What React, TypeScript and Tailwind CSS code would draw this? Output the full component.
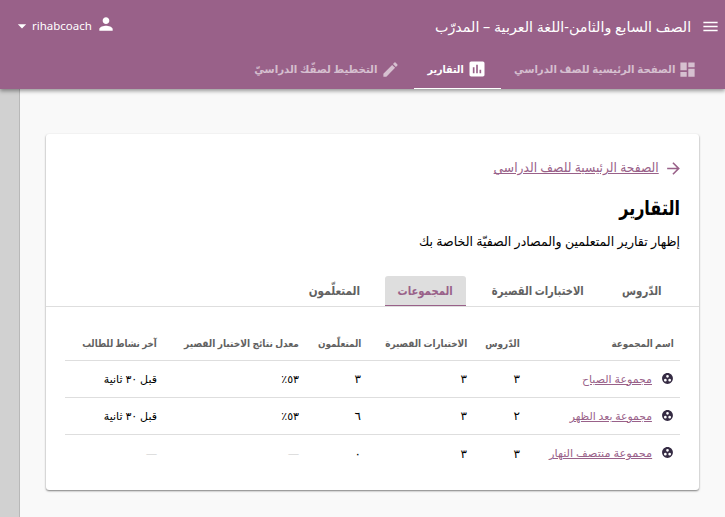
import type { ReactNode } from "react";
import {
  MdMenu,
  MdPerson,
  MdArrowDropDown,
  MdDashboard,
  MdAssessment,
  MdArrowForward,
  MdGroupWork,
} from "react-icons/md";

const font = "font-['Noto_Sans','DejaVu_Sans',sans-serif]";
const columns = "grid grid-cols-[154px_53px_106px_62px_142px_98px]";

const headings = [
  { label: "اسم المجموعة", fit: "scale-x-[0.88]" },
  { label: "الدّروس", fit: "scale-x-[0.89]" },
  { label: "الاختبارات القصيرة", fit: "scale-x-[0.89]" },
  { label: "المتعلّمون", fit: "scale-x-[0.88]" },
  { label: "معدل نتائج الاختبار القصير", fit: "scale-x-[0.905]" },
  { label: "آخر نشاط للطالب", fit: "scale-x-[0.87]" },
];

const groups = [
  { name: "مجموعة الصباح", fit: "scale-x-100", cells: ["٣", "٣", "٣", "٥٣٪", "قبل ٣٠ ثانية"] },
  { name: "مجموعة بعد الظهر", fit: "scale-x-[0.98]", cells: ["٢", "٣", "٦", "٥٣٪", "قبل ٣٠ ثانية"] },
  { name: "مجموعة منتصف النهار", fit: "scale-x-[1.03]", cells: ["٣", "٣", "٠", "—", "—"] },
];

// Condensed text anchored at its right-hand start.
function Fit({ children, className }: { children: ReactNode; className: string }) {
  return <span className={`inline-block origin-right whitespace-nowrap ${className}`}>{children}</span>;
}

function PencilIcon() {
  return (
    <svg viewBox="0 0 24 24" className="size-[19px] shrink-0" fill="currentColor">
      <path d="M3 17.25V21h3.75L17.81 9.94l-3.75-3.75L3 17.25zM20.71 7.04a1 1 0 0 0 0-1.41l-2.34-2.34a1 1 0 0 0-1.41 0l-1.83 1.83 3.75 3.75 1.83-1.83z" />
    </svg>
  );
}

function NavTab({ icon, children, className }: { icon: ReactNode; children: ReactNode; className: string }) {
  return (
    <div className={`flex h-[37px] items-center border-b pb-[2px] text-[11px] font-bold whitespace-nowrap ${className}`}>
      {icon}
      {children}
    </div>
  );
}

function cellStyle(cell: string) {
  if (cell === "—") return "pr-[6px] text-[#dedede]";
  if (cell.length === 1) return "pr-[6px] text-[12px]";
  return "pr-[6px] whitespace-nowrap";
}

export default function App() {
  return (
    <div dir="rtl" className={`h-[517px] w-[725px] overflow-hidden bg-[#f9f9f9] text-black ${font}`}>
      <header className="relative z-10 h-[89px] bg-[#996189] text-white shadow-[0_2px_4px_rgba(0,0,0,0.4)]">
        <div className="flex h-[52px] items-center pr-[5px] pl-[12px]">
          <MdMenu size={19} />
          <h1 className="mr-[10px] text-[14px]">
            <Fit className="scale-x-[1.02]">الصف السابع والثامن-اللغة العربية – المدرّب</Fit>
          </h1>
          <div className="mr-auto flex items-center">
            <MdPerson size={20} className="mb-1" />
            <span className="mr-[4px] text-[11.5px]">rihabcoach</span>
            <MdArrowDropDown size={20} />
          </div>
        </div>
        <nav className="flex pr-[16px]">
          <NavTab icon={<MdDashboard size={19} className="shrink-0" />} className="w-[208px] gap-[3px] border-transparent pr-[12px] text-white/60">
            <Fit className="scale-x-[0.925]">الصفحة الرئيسية للصف الدراسي</Fit>
          </NavTab>
          <NavTab icon={<MdAssessment size={20} className="shrink-0" />} className="w-[87px] gap-[3px] border-white pr-[14px]">
            <Fit className="scale-x-[0.87]">التقارير</Fit>
          </NavTab>
          <NavTab icon={<PencilIcon />} className="gap-[4px] border-transparent pr-[14px] text-white/60">
            <Fit className="scale-x-[0.93]">التخطيط لصفّك الدراسيّ</Fit>
          </NavTab>
        </nav>
      </header>
      <div className="flex h-[428px] justify-between">
        <main className="mt-[45px] mr-[26px] h-[356px] w-[653px] rounded-[3px] bg-white shadow-[0_1px_2px_rgba(0,0,0,0.5)]">
          <div className="px-[19px] pt-[24px]">
            <div className="flex h-[20px] items-center gap-[6px] text-[#996189]">
              <MdArrowForward size={19} className="-mr-[3px] shrink-0" />
              <a className="-mr-[1px] text-[13px]">
                <Fit className="scale-x-[0.945] underline">الصفحة الرئيسية للصف الدراسي</Fit>
              </a>
            </div>
            <h2 className="mt-[16px] h-[28px] text-[20px] leading-[28px] font-bold">
              <Fit className="scale-x-[0.8]">التقارير</Fit>
            </h2>
            <p className="mt-[9px] h-[21px] text-[13px] leading-[20px]">
              <Fit className="scale-x-[0.967]">إظهار تقارير المتعلمين والمصادر الصفيّة الخاصة بك</Fit>
            </p>
          </div>
          <div className="mt-[24px] flex h-[31px] border-b border-[#dedede] pr-[25px] text-[12px] font-bold whitespace-nowrap text-[#616161]">
            <div className="flex w-[77px] items-center pr-[13px]">
              <Fit className="scale-x-[0.85]">الدّروس</Fit>
            </div>
            <div className="flex w-[131px] items-center pr-[13px]">
              <Fit className="scale-x-[0.83]">الاختبارات القصيرة</Fit>
            </div>
            <div className="flex w-[81px] items-center rounded-t-[3px] border-b border-[#996189] bg-[#dedede] pr-[13px] text-[#996189]">
              <Fit className="scale-x-[0.84]">المجموعات</Fit>
            </div>
            <div className="flex items-center pr-[25px]">
              <Fit className="scale-x-[0.87]">المتعلّمون</Fit>
            </div>
          </div>
          <div className="mt-[20px] px-[19px]">
            <div className={`${columns} h-[34px] items-center border-b border-[#dedede] text-[10px] font-bold text-[#616161]`}>
              {headings.map((heading) => (
                <div key={heading.label} className="pr-[6px]">
                  <Fit className={heading.fit}>{heading.label}</Fit>
                </div>
              ))}
            </div>
            {groups.map((group) => (
              <div key={group.name} className={`${columns} h-[37px] items-center border-b border-[#dedede] text-[11px] last:border-0`}>
                <div className="flex items-center gap-[9px] pr-[6px] text-[#996189]">
                  <MdGroupWork size={13} className="mb-[2px] shrink-0 text-[#352b43]" />
                  <a>
                    <Fit className={`underline ${group.fit}`}>{group.name}</Fit>
                  </a>
                </div>
                {group.cells.map((cell, i) => (
                  <div key={i} className={cellStyle(cell)}>{cell}</div>
                ))}
              </div>
            ))}
          </div>
        </main>
        <div className="h-full w-[20px] border-r border-[#b8b8b8] bg-[#d1d1d1]" />
      </div>
    </div>
  );
}
